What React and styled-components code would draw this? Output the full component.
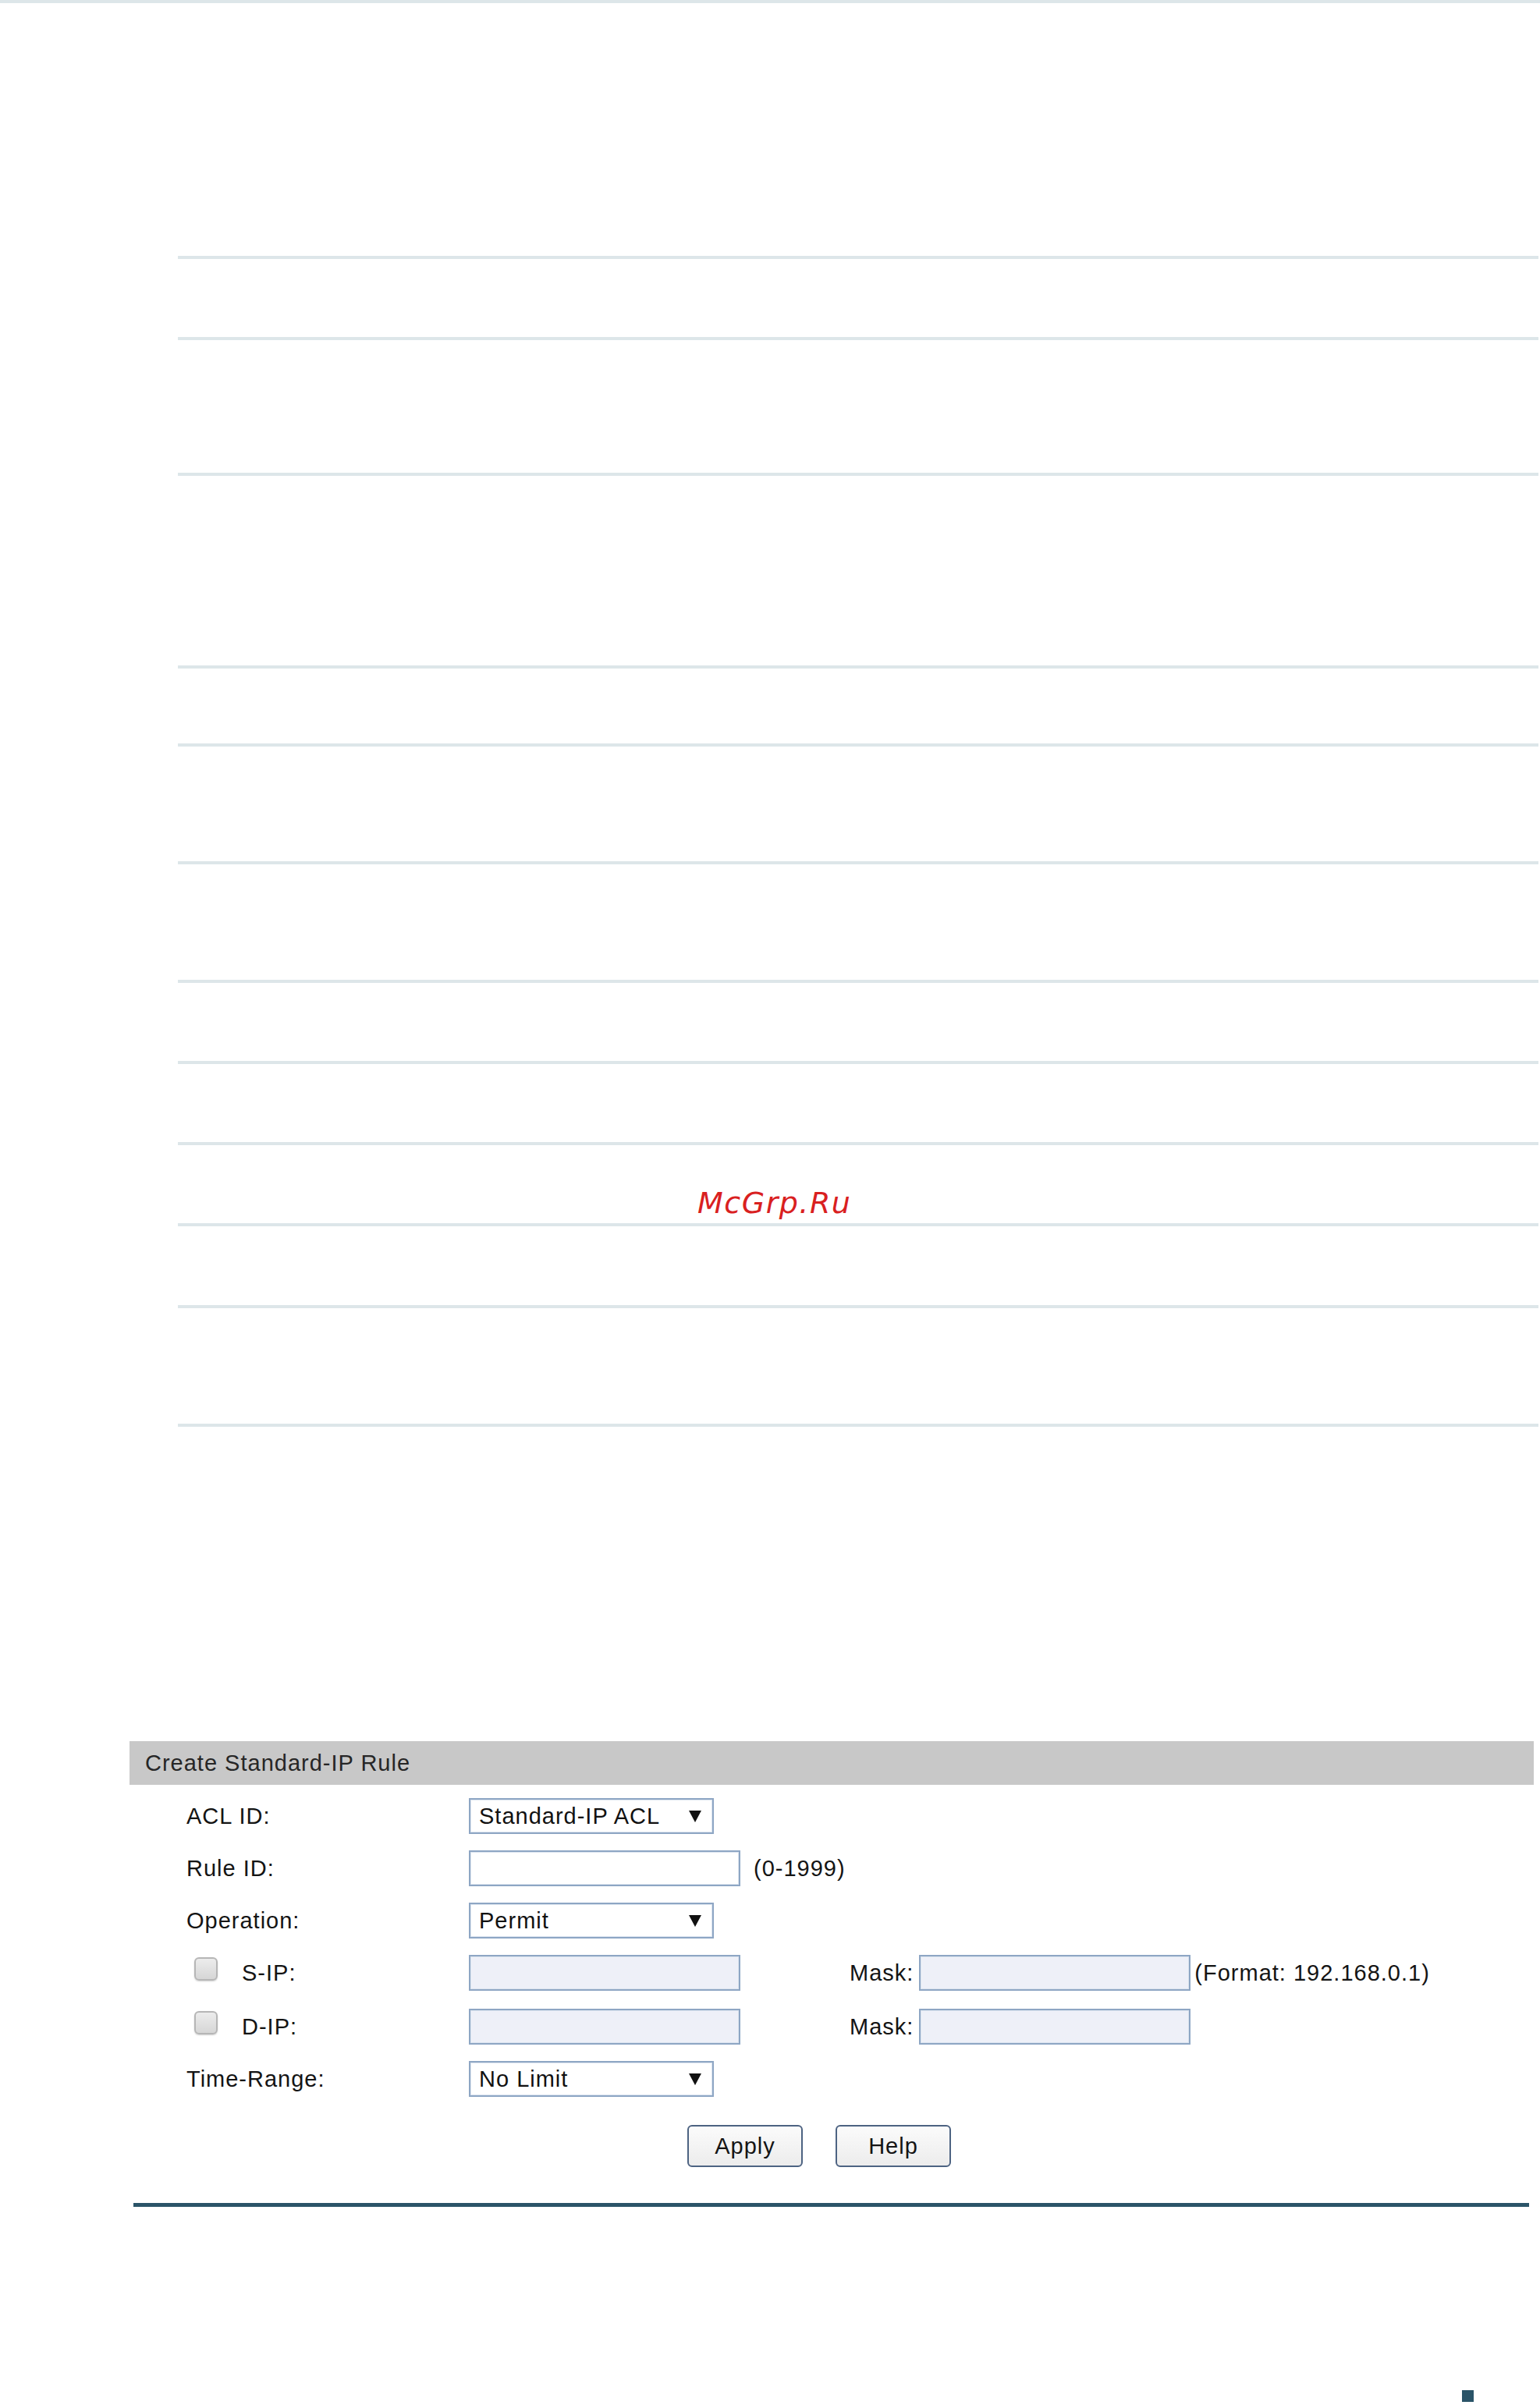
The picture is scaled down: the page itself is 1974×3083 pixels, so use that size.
import React from "react";
import styled, { createGlobalStyle } from "styled-components";

const GlobalStyle = createGlobalStyle`
  html, body {
    margin: 0;
    padding: 0;
    background: #ffffff;
  }
  body {
    font-family: "Liberation Sans", Arial, sans-serif;
  }
`;

/* Page frame */
const Page = styled.div`
  position: relative;
  width: 1974px;
  height: 3083px;
  overflow: hidden;
  background: #fff;
`;

const TopRule = styled.div`
  height: 4px;
  background: #dde6e9;
`;

/* Empty ruled table in the upper half */
const RuledList = styled.div`
  display: flex;
  flex-direction: column;
  margin: 0 2px 0 228px;
`;

const Rule = styled.div`
  height: 4px;
  margin-top: ${(p) => p.$gap}px;
  background: #dde6e9;
`;

const Watermark = styled.div`
  position: absolute;
  left: 894px;
  top: 1523px;
  font-family: "DejaVu Sans", Verdana, sans-serif;
  font-style: italic;
  font-size: 38px;
  line-height: 38px;
  letter-spacing: 1.5px;
  color: #d9201f;
`;

/* Form panel */
const Panel = styled.section`
  margin: 403px 0 0 166px;
  width: 1800px;
  color: #141414;
  font-size: 29px;
  letter-spacing: 1px;
`;

const PanelHeader = styled.div`
  display: flex;
  align-items: center;
  height: 56px;
  padding-left: 20px;
  background: #c8c8c8;
  color: #262626;
`;

const FormBody = styled.div`
  display: flex;
  flex-direction: column;
  gap: 21px;
  padding: 17px 0 0 73px;
`;

const Row = styled.div`
  display: flex;
  align-items: center;
  height: 46px;
  margin-top: ${(p) => p.$shift || 0}px;
`;

const LabelCell = styled.div`
  display: flex;
  align-items: center;
  width: 362px;
  flex-shrink: 0;
`;

const Checkbox = styled.span`
  display: inline-block;
  box-sizing: border-box;
  width: 30px;
  height: 30px;
  margin: 0 31px 10px 10px;
  border: 2px solid #b6b6b6;
  border-radius: 6px;
  background: linear-gradient(#ececec, #d6d6d6);
  box-shadow: 0 1px 2px rgba(0, 0, 0, 0.18);
`;

const SelectBox = styled.div`
  display: flex;
  align-items: center;
  justify-content: space-between;
  box-sizing: border-box;
  width: 314px;
  height: 46px;
  padding: 0 14px 0 11px;
  border: 2px solid #8ea6c4;
  box-shadow: inset 0 0 0 1px #dbe4ef;
  background: #fff;
  color: #111;
`;

const Arrow = styled.svg`
  width: 16px;
  height: 17px;
  fill: #111;
`;

const TextBox = styled.div`
  box-sizing: border-box;
  width: 348px;
  height: 46px;
  border: 2px solid #8ea6c4;
  box-shadow: inset 0 0 0 1px #dbe4ef;
  background: ${(p) => (p.$tinted ? "#eef0f8" : "#ffffff")};
`;

const Hint = styled.span`
  margin-left: ${(p) => p.$gap}px;
  white-space: nowrap;
`;

const MaskLabel = styled.span`
  margin: 0 7px 0 140px;
`;

const ButtonRow = styled.div`
  display: flex;
  gap: 42px;
  margin-top: 36px;
  padding-left: 715px;
`;

const Button = styled.button`
  box-sizing: border-box;
  width: 148px;
  height: 54px;
  padding: 0;
  border: 2px solid #4d6382;
  border-radius: 6px;
  background: linear-gradient(#fbfbfb, #ececec);
  font-family: "Liberation Sans", Arial, sans-serif;
  font-size: 29px;
  letter-spacing: 1px;
  color: #141414;
`;

const Divider = styled.div`
  margin: 46px 0 0 5px;
  width: 1789px;
  height: 5px;
  background: #2b5468;
`;

const PageMark = styled.div`
  margin: 235px 0 0 1874px;
  width: 15px;
  height: 15px;
  background: #2a5468;
`;

const ruleGaps = [324, 100, 170, 243, 96, 147, 148, 100, 100, 100, 101, 148];

const DropArrow = () => (
  <Arrow viewBox="0 0 16 17">
    <path d="M0 1h16L8 16z" />
  </Arrow>
);

const App = () => (
  <>
    <GlobalStyle />
    <Page>
      <TopRule />
      <RuledList>
        {ruleGaps.map((gap, i) => (
          <Rule key={i} $gap={gap} />
        ))}
      </RuledList>
      <Watermark>McGrp.Ru</Watermark>

      <Panel>
        <PanelHeader>Create Standard-IP Rule</PanelHeader>
        <FormBody>
          <Row>
            <LabelCell>ACL ID:</LabelCell>
            <SelectBox>
              <span>Standard-IP ACL</span>
              <DropArrow />
            </SelectBox>
          </Row>
          <Row>
            <LabelCell>Rule ID:</LabelCell>
            <TextBox />
            <Hint $gap={17}>(0-1999)</Hint>
          </Row>
          <Row>
            <LabelCell>Operation:</LabelCell>
            <SelectBox>
              <span>Permit</span>
              <DropArrow />
            </SelectBox>
          </Row>
          <Row>
            <LabelCell>
              <Checkbox />
              S-IP:
            </LabelCell>
            <TextBox $tinted />
            <MaskLabel>Mask:</MaskLabel>
            <TextBox $tinted />
            <Hint $gap={5}>(Format: 192.168.0.1)</Hint>
          </Row>
          <Row $shift={2}>
            <LabelCell>
              <Checkbox />
              D-IP:
            </LabelCell>
            <TextBox $tinted />
            <MaskLabel>Mask:</MaskLabel>
            <TextBox $tinted />
          </Row>
          <Row>
            <LabelCell>Time-Range:</LabelCell>
            <SelectBox>
              <span>No Limit</span>
              <DropArrow />
            </SelectBox>
          </Row>
        </FormBody>
        <ButtonRow>
          <Button type="button">Apply</Button>
          <Button type="button">Help</Button>
        </ButtonRow>
        <Divider />
      </Panel>

      <PageMark />
    </Page>
  </>
);

export default App;
